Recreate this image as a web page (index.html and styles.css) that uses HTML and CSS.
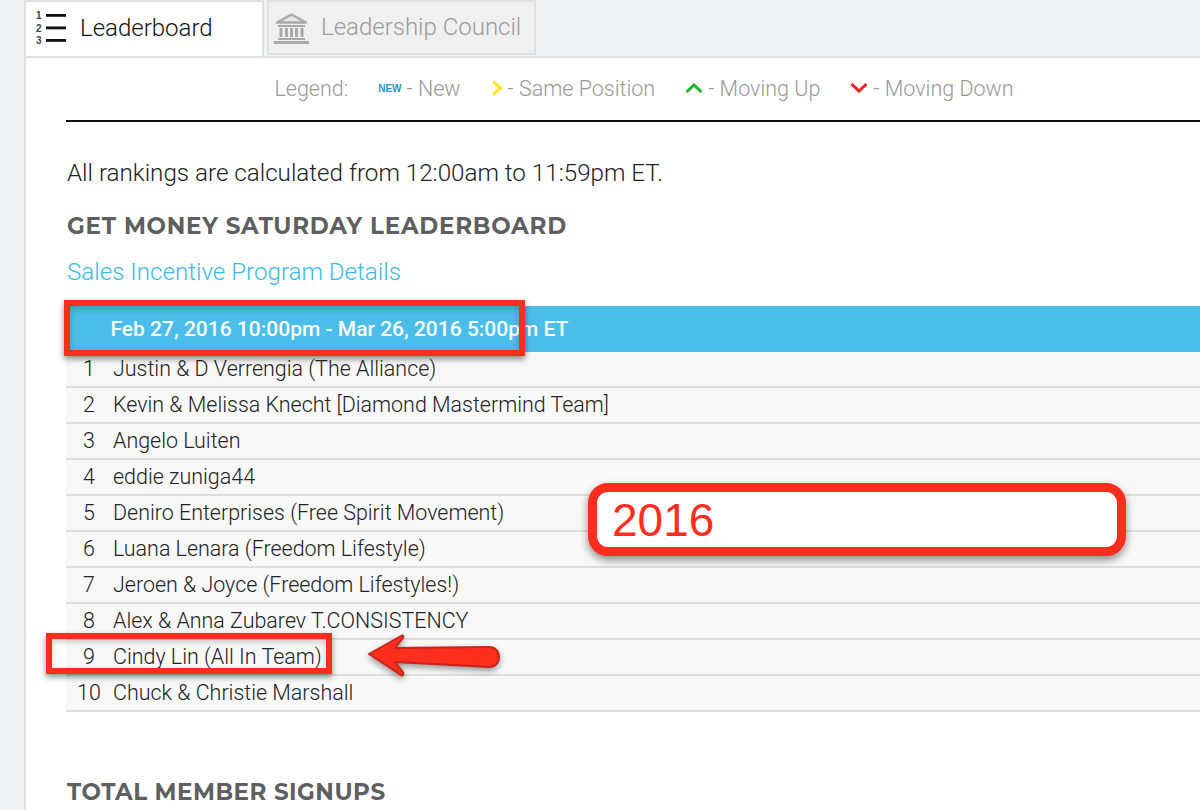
FILE: index.html
```html
<!DOCTYPE html>
<html lang="en">
<head>
<meta charset="utf-8">
<title>Leaderboard</title>
<link rel="stylesheet" href="styles.css">
</head>
<body>
<div class="page">
  <nav class="tabs">
    <div class="tab tab-active">
      <svg class="tab-icon" width="32" height="38" viewBox="0 0 32 38">
        <text x="0" y="10" class="rank-num">1</text>
        <text x="0" y="22.500" class="rank-num">2</text>
        <text x="0" y="35" class="rank-num">3</text>
        <rect x="10" y="5" width="20" height="2.800" fill="#111"/>
        <rect x="10" y="17.500" width="20" height="2.800" fill="#111"/>
        <rect x="10" y="30" width="20" height="2.800" fill="#111"/>
      </svg>
      <span>Leaderboard</span>
    </div>
    <div class="tab tab-off">
      <svg class="bank-icon" width="35" height="31" viewBox="0 0 35 31" fill="#a9a9a9">
        <path d="M17.500 1.500 L32 9.500 H3 Z" fill="#e4e4e4" stroke="#a9a9a9" stroke-width="2.500" stroke-linejoin="round"/>
        <rect x="4" y="12" width="27" height="2"/>
        <rect x="5.500" y="15" width="3" height="9"/>
        <rect x="11" y="15" width="3" height="9"/>
        <rect x="16" y="15" width="3" height="9"/>
        <rect x="21" y="15" width="3" height="9"/>
        <rect x="26.500" y="15" width="3" height="9"/>
        <rect x="4" y="25" width="27" height="2"/>
        <rect x="0" y="28" width="35" height="3"/>
      </svg>
      <span>Leadership Council</span>
    </div>
  </nav>
  <main class="panel">
    <div class="legend">
      <span class="legend-title">Legend:</span>
      <span class="legend-item"><b class="new-badge">NEW</b>- New</span>
      <span class="legend-item"><svg width="12" height="16" viewBox="0 0 12 16"><path d="M2 1.500 L9.500 8 L2 14.500" fill="none" stroke="#fde725" stroke-width="3"/></svg>- Same Position</span>
      <span class="legend-item"><svg width="18" height="10" viewBox="0 0 18 10"><path d="M1.500 9 L9 2 L16.500 9" fill="none" stroke="#1fb52f" stroke-width="3"/></svg>- Moving Up</span>
      <span class="legend-item"><svg width="18" height="10" viewBox="0 0 18 10"><path d="M1.500 1 L9 8 L16.500 1" fill="none" stroke="#f0202a" stroke-width="3"/></svg>- Moving Down</span>
    </div>
    <p class="note">All rankings are calculated from 12:00am to 11:59pm ET.</p>
    <h2 class="heading">GET MONEY SATURDAY LEADERBOARD</h2>
    <a class="details" href="#">Sales Incentive Program Details</a>
    <section class="board">
      <div class="board-head">Feb 27, 2016 10:00pm - Mar 26, 2016 5:00pm ET</div>
      <div class="row"><span class="num">1</span><span>Justin &amp; D Verrengia (The Alliance)</span></div>
      <div class="row"><span class="num">2</span><span>Kevin &amp; Melissa Knecht [Diamond Mastermind Team]</span></div>
      <div class="row"><span class="num">3</span><span>Angelo Luiten</span></div>
      <div class="row"><span class="num">4</span><span>eddie zuniga44</span></div>
      <div class="row"><span class="num">5</span><span>Deniro Enterprises (Free Spirit Movement)</span></div>
      <div class="row"><span class="num">6</span><span>Luana Lenara (Freedom Lifestyle)</span></div>
      <div class="row"><span class="num">7</span><span>Jeroen &amp; Joyce (Freedom Lifestyles!)</span></div>
      <div class="row"><span class="num">8</span><span>Alex &amp; Anna Zubarev T.CONSISTENCY</span></div>
      <div class="row"><span class="num">9</span><span>Cindy Lin (All In Team)</span></div>
      <div class="row"><span class="num">10</span><span>Chuck &amp; Christie Marshall</span></div>
    </section>
    <h2 class="heading heading-low">TOTAL MEMBER SIGNUPS</h2>
  </main>
  <div class="mark mark-date"></div>
  <div class="mark mark-rank"></div>
  <div class="callout">2016</div>
  <svg class="arrow" width="145" height="50" viewBox="0 0 145 50">
    <path d="M5 20 L37 2 C39 1 40 2 39 4 L31 14 L125 13 C131 13 135 17 135 23 C135 29 131 33 125 33 L31 28 L39 38 C40 41 39 42 37 41 Z" fill="#ff2d1e" stroke="#c9241a" stroke-width="2" stroke-linejoin="round"/>
  </svg>
</div>
</body>
</html>
```
FILE: styles.css
```css
* { box-sizing: border-box; }
html, body { margin: 0; padding: 0; height: 810px; overflow: hidden; background: #f1f2f6; }
.page { position: relative; width: 1200px; height: 810px; padding-left: 24px; font-family: Roboto, "Liberation Sans", sans-serif; font-weight: 300; color: #222; }
.tabs { display: flex; height: 56px; gap: 3px; background: #f1f2f6; }
.tab { display: flex; align-items: center; height: 56px; padding-bottom: 2px; border: 2px solid #e0e0e0; border-bottom: 0; font-size: 24px; font-weight: 300; }
.tab-active { width: 240px; background: #fff; color: #111; padding-left: 10px; gap: 12px; }
.tab-off { width: 269px; height: 55px; background: #f0f0f0; color: #9a9a9a; padding-left: 5px; gap: 12px; border-bottom: 2px solid #e0e0e0; }
.rank-num { font: 700 10px "Liberation Sans", sans-serif; fill: #444; }
.tab-icon { flex: none; }
.bank-icon { flex: none; margin-top: 4px; }
.panel { height: 754px; background: #fff; border-left: 2px solid #e0e0e0; border-top: 2px solid #e0e0e0; padding: 0 0 0 40px; }
.legend { display: flex; align-items: center; justify-content: center; height: 64px; padding: 0 0 2px 22px; border-bottom: 2px solid #111; font-size: 21.500px; color: #999; gap: 30px; }
.legend-item { display: flex; align-items: center; gap: 5px; white-space: pre; }
.new-badge { font: 700 10px "Liberation Sans", sans-serif; color: #1f95c4; }
.note { margin: 0; padding: 35px 0 0 1px; font-size: 24.200px; line-height: 32px; color: #222; }
.heading { margin: 0; padding: 21px 0 0 1px; font: 700 23px/32px Montserrat, Lato, sans-serif; letter-spacing: .75px; color: #5e605f; }
.details { display: block; margin-top: 14px; padding-left: 1px; font-size: 24.150px; line-height: 32px; color: #3cb9ea; text-decoration: none; }
.board { margin-top: 18px; }
.board-head { height: 46px; background: #4abde8; color: #fff; font-size: 21px; font-weight: 500; line-height: 46px; padding-left: 44.500px; }
.row { display: flex; height: 36px; align-items: center; padding-bottom: 2px; font-size: 21.450px; color: #222; background: #f8f8f8; border-bottom: 2px solid #dedede; }
.num { width: 46px; margin-right: 1px; text-align: center; flex: none; }
.heading-low { padding-top: 64px; letter-spacing: .5px; }
.mark { position: absolute; border: 6px solid #ff2d1e; box-shadow: 0 3px 6px rgba(0,0,0,.45), inset 0 3px 6px rgba(0,0,0,.2); }
.mark-date { left: 64px; top: 300px; width: 461px; height: 56px; }
.mark-rank { left: 46px; top: 633px; width: 286px; height: 41px; }
.callout { position: absolute; left: 588px; top: 483px; width: 538px; height: 73px; border: 9px solid #ff2d1e; border-radius: 20px; background: #fff; box-shadow: 0 4px 8px rgba(0,0,0,.45); color: #ff2d1e; font: 400 46px/1 "Liberation Sans", sans-serif; padding: 5px 0 0 15px; }
.arrow { position: absolute; left: 364px; top: 634px; filter: drop-shadow(0 3px 3px rgba(0,0,0,.4)); }
```
